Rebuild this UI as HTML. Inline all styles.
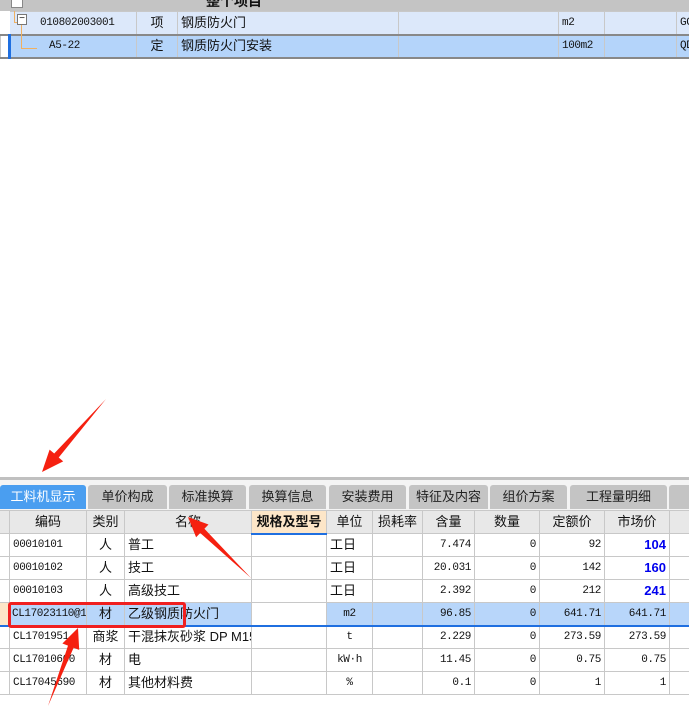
<!DOCTYPE html>
<html><head><meta charset="utf-8"><style>
*{margin:0;padding:0;box-sizing:border-box}
body{width:689px;height:718px;background:#fff;position:relative;overflow:hidden;font-family:"Liberation Sans","Noto Sans CJK SC",sans-serif;font-size:13px;color:#111}
.a{position:absolute}
table{border-collapse:collapse;table-layout:fixed;position:absolute}
td{border:1px solid #c8c8c8;height:23px;padding:0 3px;white-space:nowrap;overflow:hidden;font-size:13px;line-height:14px;vertical-align:middle}
.m{font-family:"Liberation Mono","Noto Sans CJK SC",monospace;font-size:11px;letter-spacing:-0.4px}
.r{text-align:right}.c{text-align:center}
.tab{position:absolute;top:485px;height:24px;background:#c4c4c4;border-radius:3px 3px 0 0;text-align:center;line-height:24px;font-size:13px;color:#222}
.b{color:#0000ee;font-weight:bold}
</style></head><body>
<!-- top grid -->
<div class="a" style="left:0;top:0;width:689px;height:11px;background:#c4c4c4"></div>
<div class="a" style="left:11px;top:-4px;width:12px;height:12px;border:1px solid #888;background:#fff"></div>
<div class="a" style="left:206px;top:-9px;font-weight:bold;font-size:14px">整个项目</div>
<table style="left:0;top:11px;width:700px">
<colgroup><col style="width:9px"><col style="width:127px"><col style="width:41px"><col style="width:221px"><col style="width:160px"><col style="width:46px"><col style="width:72px"><col style="width:24px"></colgroup>
<tr style="background:#dce8fa"><td style="background:#fff;border-color:#fff"></td><td class="m" style="padding-left:30px;border-left:none">010802003001</td><td class="c">项</td><td>钢质防火门</td><td></td><td class="m">m2</td><td></td><td class="m">GC</td></tr>
<tr style="background:#b4d4fa;border-top:2px solid #888;border-bottom:2px solid #888"><td style="background:#fff;border-right:3px solid #1f6fe0"></td><td class="m" style="padding-left:38px">A5-22</td><td class="c">定</td><td>钢质防火门安装</td><td></td><td class="m">100m2</td><td></td><td class="m">QD</td></tr>
</table>
<div class="a" style="left:14px;top:11px;width:1px;height:12px;background:#f0b060"></div>
<div class="a" style="left:14px;top:22px;width:4px;height:1px;background:#f0b060"></div>
<div class="a" style="left:17px;top:14px;width:10px;height:11px;border:1px solid #777;background:#fff;font-size:10px;line-height:8px;text-align:center">−</div>
<div class="a" style="left:21px;top:25px;width:1px;height:24px;background:#f0b060"></div>
<div class="a" style="left:21px;top:48px;width:16px;height:1px;background:#f0b060"></div>
<!-- separator -->
<div class="a" style="left:0;top:477px;width:689px;height:3px;background:#c0c0c0"></div>
<div class="a" style="left:0;top:480px;width:689px;height:30px;background:#f4f4f4"></div>
<div class="tab" style="left:0;width:86px;background:#4a9ef0;color:#fff">工料机显示</div>
<div class="tab" style="left:88px;width:79px">单价构成</div>
<div class="tab" style="left:169px;width:77px">标准换算</div>
<div class="tab" style="left:249px;width:77px">换算信息</div>
<div class="tab" style="left:329px;width:77px">安装费用</div>
<div class="tab" style="left:409px;width:79px">特征及内容</div>
<div class="tab" style="left:490px;width:77px">组价方案</div>
<div class="tab" style="left:570px;width:97px">工程量明细</div>
<div class="tab" style="left:669px;width:30px"></div>
<!-- bottom grid -->
<table style="left:-1px;top:510px;width:691px">
<colgroup><col style="width:10px"><col style="width:77px"><col style="width:38px"><col style="width:127px"><col style="width:75px"><col style="width:46px"><col style="width:50px"><col style="width:52px"><col style="width:65px"><col style="width:65px"><col style="width:65px"><col style="width:21px"></colgroup>
<tr style="background:#e8e8e8"><td></td><td class="c">编码</td><td class="c">类别</td><td class="c">名称</td><td class="c" style="background:#fde6c8;font-weight:bold;border-bottom:2px solid #1f6fe0">规格及型号</td><td class="c">单位</td><td class="c">损耗率</td><td class="c">含量</td><td class="c">数量</td><td class="c">定额价</td><td class="c">市场价</td><td></td></tr>
<tr><td></td><td class="m">00010101</td><td class="c">人</td><td>普工</td><td></td><td>工日</td><td></td><td class="m r">7.474</td><td class="m r">0</td><td class="m r">92</td><td class="r b">104</td><td></td></tr>
<tr><td></td><td class="m">00010102</td><td class="c">人</td><td>技工</td><td></td><td>工日</td><td></td><td class="m r">20.031</td><td class="m r">0</td><td class="m r">142</td><td class="r b">160</td><td></td></tr>
<tr><td></td><td class="m">00010103</td><td class="c">人</td><td>高级技工</td><td></td><td>工日</td><td></td><td class="m r">2.392</td><td class="m r">0</td><td class="m r">212</td><td class="r b">241</td><td></td></tr>
<tr style="background:#b8d6fa"><td style="background:#fde6c8"></td><td class="m" style="padding-left:2px">CL17023110@1</td><td class="c">材</td><td>乙级钢质防火门</td><td style="background:#fff"></td><td class="m c" style="border-left:1px solid #1f6fe0">m2</td><td></td><td class="m r">96.85</td><td class="m r">0</td><td class="m r">641.71</td><td class="m r">641.71</td><td></td></tr>
<tr style="border-top:2px solid #1f6fe0"><td></td><td class="m">CL1701951</td><td class="c">商浆</td><td>干混抹灰砂浆 DP M15</td><td></td><td class="m c">t</td><td></td><td class="m r">2.229</td><td class="m r">0</td><td class="m r">273.59</td><td class="m r">273.59</td><td></td></tr>
<tr><td></td><td class="m">CL17010600</td><td class="c">材</td><td>电</td><td></td><td class="m c">kW·h</td><td></td><td class="m r">11.45</td><td class="m r">0</td><td class="m r">0.75</td><td class="m r">0.75</td><td></td></tr>
<tr><td></td><td class="m">CL17045690</td><td class="c">材</td><td>其他材料费</td><td></td><td class="m c">%</td><td></td><td class="m r">0.1</td><td class="m r">0</td><td class="m r">1</td><td class="m r">1</td><td></td></tr>
</table>
<div class="a" style="left:8px;top:602px;width:178px;height:26px;border:3px solid #f02020;border-radius:3px"></div>
<svg class="a" style="left:0;top:0" width="689" height="718">
<g fill="#f52010">
<polygon points="106,399 58.7,457.5 63.2,461.4 42,472 49.6,449.6 54.2,453.5"/>
<polygon points="251,578 204.4,528.8 208.5,524.5 188,517 196.1,537.3 200.2,533"/>
<polygon points="48,706 73.6,647.8 79.2,649.9 78,628 62.4,643.5 68,645.6"/>
</g></svg>
</body></html>
